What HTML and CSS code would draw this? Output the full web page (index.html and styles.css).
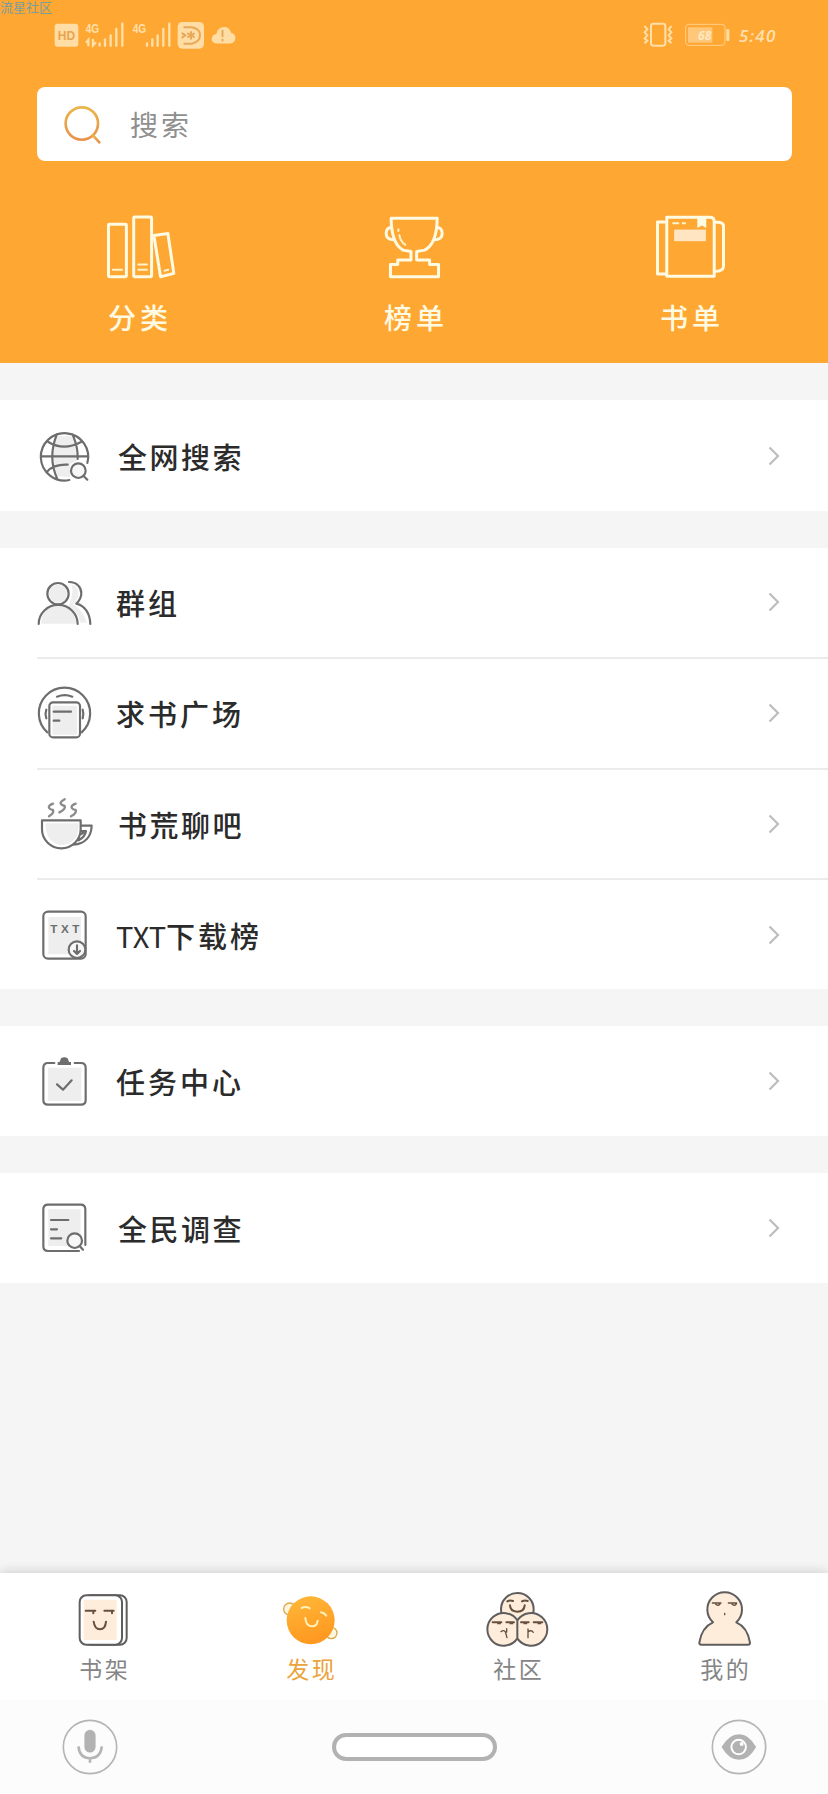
FILE: index.html
```html
<!DOCTYPE html>
<html lang="zh-CN">
<head>
<meta charset="utf-8">
<title>发现</title>
<link rel="stylesheet" href="styles.css">
</head>
<body>
<div class="app">
  <header class="header">
    <span class="watermark">流星社区</span>
    <div class="status">
      <svg class="hd" viewBox="160 60 75 90"><rect x="162" y="71" width="71" height="69" rx="9"/><text x="197.500" y="119" text-anchor="middle" class="hd-text">HD</text></svg>
      <svg class="signal" viewBox="255 60 120 90"><text x="257" y="98" class="net" textLength="40" lengthAdjust="spacingAndGlyphs">4G</text><path d="M265 136v-16l-5 6M279 120v16l7-7M299 130v7M315 118v19M332 106v31M349 87v50M367 70v67"/></svg>
      <svg class="signal second" viewBox="396 60 120 90"><text x="398" y="99" class="net" textLength="40" lengthAdjust="spacingAndGlyphs">4G</text><path d="M441 130v7M457 118v19M473 106v31M490 87v50M508 70v67"/></svg>
      <svg class="cast" viewBox="531 60 84 90"><rect x="533" y="66" width="79" height="80" rx="14"/><path class="cut" d="M553 82h22q25 4 25 24t-25 25h-22M547 100l9 6-9 6M573 96v20M564 101l18 10M582 101l-18 10"/></svg>
      <svg class="cloud" viewBox="632 60 76 90"><path d="M648 131q-15-2-14-15 2-12 14-14 5-21 24-21 17 0 21 17 14 3 13 17-1 13-14 16z"/><path class="cut" d="M667 92v17M667 119v3"/></svg>
      <svg class="vibrate" viewBox="684 60 96 90"><rect x="711" y="71" width="43" height="66" rx="7"/><path d="M693 80l7 8-8 9 8 9-8 9 8 7-7 6M771 80l-7 8 8 9-8 9 8 9-8 7 7 6"/></svg>
      <svg class="battery" viewBox="808 60 138 90"><rect class="outline" x="813" y="73" width="118" height="63" rx="9"/><rect class="level" x="820" y="82" width="73" height="46"/><rect class="tip" x="935" y="87" width="9" height="36" rx="3"/><text x="870" y="120" text-anchor="middle" class="percent">68</text></svg>
      <span class="clock">5:40</span>
    </div>
    <div class="search">
      <svg class="search-icon" viewBox="190 313 116 118"><defs><linearGradient id="ring" x1="0" y1="0" x2="0" y2="1"><stop offset="0" stop-color="#e8b64c"/><stop offset="1" stop-color="#e8924a"/></linearGradient></defs><g fill="none" stroke="url(#ring)" stroke-width="8" stroke-linecap="round"><circle cx="246" cy="369" r="49"/><path d="M279 404l20 22"/></g></svg>
      <span class="placeholder">搜索</span>
    </div>
    <nav class="shortcuts">
      <a class="shortcut"><svg viewBox="66 40 216 202"><g class="line"><rect x="85" y="74" width="54" height="158" rx="3"/><rect x="161" y="52" width="54" height="180" rx="3"/><path d="M222 108l42-6 18 120-40 10z"/></g><path class="thin" d="M98 211h28M175 195h26M175 211h26M254 214l11-3"/></svg><span>分类</span></a>
      <a class="shortcut"><svg viewBox="894 40 216 202"><g class="line"><path d="M933 56h139q-1 78-38 96l-24 4v26h39v13h27v37H931v-37h22v-13h40v-26l-24-4q-35-19-36-96z"/><path d="M935 83q-17 1-17 19t24 19M1070 83q17 1 17 19t-24 19"/></g><path class="thin" d="M955 89v5M958 107q3 20 18 29"/></svg><span>榜单</span></a>
      <a class="shortcut"><svg viewBox="642 40 216 202"><g class="line"><path d="M680 53h130q13 0 13 13v165H680zM680 67h-28v157h28M823 67q28-1 28 12v122q0 15-28 15"/></g><path class="thin" d="M699 71h16M728 71h7"/><path fill="#fffbe3" d="M772 54h27v31l-13-7-14 7z"/><path fill="#ffe5c2" d="M702 90h96v35h-96z"/></svg><span>书单</span></a>
    </nav>
  </header>

  <main class="content">
    <section class="group web">
      <a class="row"><svg class="icon" viewBox="45 50 174 168"><path class="soft" d="M106 75h56l13 70-25 13v40l-40-4q-24-60-4-119z"/><path d="M202 155A71 71 0 1 0 148 206M63 135h142M111 68q-29 70 1 135M158 70q17 40 15 73M85 92q46 28 98 0M81 181q21-23 62-21"/><circle cx="175" cy="178" r="22" class="paper"/><path d="M190 193l12 12"/></svg><span class="label inset">全网搜索</span><svg class="chevron" viewBox="0 0 12 20"><path d="M1.500 1.500l8.500 8.500-8.500 8.500"/></svg></a>
    </section>
    <section class="group social">
      <a class="row"><svg class="icon" viewBox="45 495 174 168"><path class="soft" d="M64 644q1-52 51-52t53 52zM155 527q22 4 20 27-2 20-16 32 30 16 41 55h-18q-8-34-36-50 16-36 9-64z"/><circle class="soft" cx="114" cy="554" r="27"/><circle cx="114" cy="554" r="32"/><path d="M56 645A58 57 0 0 1 173 645M147 519c24 0 37 16 37 34q0 17-15 31c26 6 41 30 42 61"/></svg><span class="label">群组</span><svg class="chevron" viewBox="0 0 12 20"><path d="M1.500 1.500l8.500 8.500-8.500 8.500"/></svg></a>
      <a class="row"><svg class="icon" viewBox="45 42 174 168"><path d="M82 184A77 77 0 1 1 185 184M111 77q23-9 46 0M79 116q-5 13 0 26M188 116q4 13 0 26"/><rect x="88" y="94" width="92" height="105" rx="11" fill="#fff"/><path class="soft" d="M97 104h74v87H97z"/><path d="M101 122h52M101 149h17"/></svg><span class="label">求书广场</span><svg class="chevron" viewBox="0 0 12 20"><path d="M1.500 1.500l8.500 8.500-8.500 8.500"/></svg></a>
      <a class="row"><svg class="icon" viewBox="45 370 174 168"><path class="soft" d="M76 452h100q2 61-51 66-48-7-49-66z"/><path d="M66 443h116v27a58 57 0 0 1-116 0zM183 459h32c-1 33-20 54-55 57M183 475h15q-3 18-22 28M184 484l6-4"/><path class="steam" d="M99 393q-15 6-12 12t12 7q4 9-12 19M134 380q-15 8-12 13t12 7q4 9-16 19M167 393q-15 6-12 12t12 7q4 9-14 19"/></svg><span class="label inset">书荒聊吧</span><svg class="chevron" viewBox="0 0 12 20"><path d="M1.500 1.500l8.500 8.500-8.500 8.500"/></svg></a>
      <a class="row"><svg class="icon" viewBox="45 706 174 168"><rect x="70" y="720" width="127" height="141" rx="14"/><path class="soft" d="M85 736h98v112H85z"/><text x="91" y="783" textLength="87" class="txt">TXT</text><circle class="paper" cx="171" cy="834" r="25"/><path d="M171 821v26M162 838l9 9 9-9"/></svg><span class="label"><span class="latin">TXT</span>下载榜</span><svg class="chevron" viewBox="0 0 12 20"><path d="M1.500 1.500l8.500 8.500-8.500 8.500"/></svg></a>
    </section>
    <section class="group">
      <a class="row"><svg class="icon" viewBox="45 38 174 168"><path class="soft" d="M84 82h100v100H84z"/><path d="M103 68H84q-14 0-14 14v97q0 14 14 14h99q14 0 14-14V82q0-14-14-14h-19M111 132l18 16 26-28"/><path fill="#6d6d6d" stroke="none" d="M113 74v-9h6l4-11q10-7 20 0l4 11h6v9z"/></svg><span class="label">任务中心</span><svg class="chevron" viewBox="0 0 12 20"><path d="M1.500 1.500l8.500 8.500-8.500 8.500"/></svg></a>
    </section>
    <section class="group">
      <a class="row"><svg class="icon" viewBox="45 480 174 168"><path class="soft" d="M85 508h97v110H85z"/><path d="M196 615V508q0-14-14-14H84q-14 0-14 14v111q0 14 14 14h93M93 540h52M93 568h18M93 595h31"/><circle class="paper" cx="164" cy="602" r="22"/><path d="M179 618l10 11"/></svg><span class="label inset">全民调查</span><svg class="chevron" viewBox="0 0 12 20"><path d="M1.500 1.500l8.500 8.500-8.500 8.500"/></svg></a>
    </section>
  </main>

  <nav class="tabs">
    <a class="tab"><svg viewBox="97 90 189 174"><rect x="133" y="106" width="128" height="148" rx="20" fill="#fff"/><rect x="120" y="106" width="127" height="148" rx="20" fill="#fff"/><path fill="#ffeddb" stroke="none" d="M132 119h99v121h-99z"/><path class="face" d="M138 152h29M161 154v6M194 152h28M217 154v6M162 185q3 23 19 23t18-23"/></svg><span>书架</span></a>
    <a class="tab active"><svg viewBox="717 90 189 174"><defs><linearGradient id="planet" x1=".3" y1="0" x2=".6" y2="1"><stop offset="0" stop-color="#ffb637"/><stop offset="1" stop-color="#ff961f"/></linearGradient></defs><g stroke="#dda94b" stroke-width="4" fill="#fff6df"><circle cx="749" cy="147" r="18"/><circle cx="874" cy="219" r="17"/></g><circle cx="812" cy="181" r="72" fill="url(#planet)" stroke="none"/><path stroke="#fff0b5" stroke-width="6" d="M785 144q12-6 24 1M843 157q9 1 16 10M796 174q2 24 19 25 16 1 18-17"/></svg><span>发现</span></a>
    <a class="tab"><svg viewBox="79 90 189 174"><g fill="#ffeddb"><circle cx="173" cy="148" r="49"/><path d="M173 181A49 49 0 1 0 173 235 49 49 0 1 0 173 181v54"/></g><path class="face" d="M143 124q8-5 17-1M187 124q8-5 17-1M151 136q0 18 22 19 21-1 22-19M99 187h26M140 187h23M184 187h23M222 187h26"/><path class="face small" d="M114 191h8M151 191h8M193 191h8M235 191h8M124 215q7-6 13 0l5 18M141 206v10M205 233v-26M205 216q9-8 16 1"/></svg><span>社区</span></a>
    <a class="tab"><svg viewBox="699 90 189 174"><path fill="#ffeddb" d="M759 187A52 52 0 1 1 829 187Q863 202 870 248q0 6-6 6H724q-6 0-6-6Q725 202 759 187z"/><path class="face small" d="M757 129h26M805 129h25M767 133q7 6 13-1M816 133q7 6 13-1M794 160v4"/></svg><span>我的</span></a>
  </nav>

  <footer class="system">
    <svg class="round" viewBox="64 476 170 170"><circle cx="149" cy="561" r="81"/><rect x="132" y="509" width="34" height="69" rx="17" fill="#b2b2b2" stroke="none"/><path class="thick" d="M114 559q3 36 35 36t36-36M149 597v12"/></svg>
    <span class="home"></span>
    <svg class="round" viewBox="751 476 170 170"><circle cx="836" cy="561" r="81"/><path fill="#b2b2b2" stroke="none" d="M783 561q22-39 53-39t52 39q-22 39-52 39t-53-39z"/><circle cx="835" cy="561" r="22" fill="#b2b2b2" stroke="#fff" stroke-width="6"/><circle cx="844" cy="552" r="6" fill="#fff" stroke="none"/></svg>
  </footer>
</div>
</body>
</html>
```
FILE: styles.css
```css
* { box-sizing: border-box; }
body {
  margin: 0;
  font-family: "Noto Sans CJK SC", sans-serif;
  background: #f5f5f5;
}
svg { display: block; flex: none; fill: none; overflow: visible; }
.app { width: 828px; height: 1794px; display: flex; flex-direction: column; }

.header { position: relative; height: 363px; background: #ffa733; padding-top: 20px; }
.watermark {
  position: absolute; left: 0; top: -1px;
  font-size: 13px; line-height: 15px; color: #7a9d9c;
}

.status { height: 30px; display: flex; align-items: center; padding-left: 54px; }
.status svg { height: 30px; fill: #ffdda5; }
.status path, .vibrate rect { stroke: #ffe0a9; stroke-width: 6; stroke-linecap: round; }
.status .signal path { stroke-width: 7; }
.status .signal path, .vibrate path, .vibrate rect, .status .cut { fill: none; }
.status .cut { stroke: #e6a95b; }
.status .cloud path:first-child { stroke: none; }
.hd { width: 25px; }
.signal { width: 40px; margin-left: 6px; }
.signal.second { margin-left: 7px; }
.cast { width: 28px; margin-left: 5px; }
.cloud { width: 25px; margin-left: 6px; }
.vibrate { width: 32px; margin-left: 406px; }
.battery { width: 46px; margin-left: 10px; }
.status .outline { fill: none; stroke: #ffd18c; stroke-width: 3; }
.level { fill: #ffc77a; }
.tip { fill: #ffdda5; }
.hd-text { font: bold 36px "Liberation Sans", sans-serif; fill: #e9a44e; }
.net { font: bold 36px "Liberation Sans", sans-serif; fill: #ffe1ad; }
.percent { font: italic bold 36px "Open Sans", sans-serif; fill: #ffe7c0; }
.clock {
  margin-left: 9px; font: italic 600 17px "Open Sans", sans-serif;
  letter-spacing: 1.200px; color: #ffe0b0;
}

.search {
  height: 74px; margin: 37px 36px 0 37px; border-radius: 8px; background: #fff;
  display: flex; align-items: center; padding-left: 26px;
}
.search-icon { width: 39px; height: 39px; }
.placeholder { margin-left: 28px; font-size: 28px; letter-spacing: 3px; color: #8f8f8f; }

.shortcuts { display: grid; grid-template-columns: repeat(3, 1fr); margin-top: 52px; }
.shortcut { display: flex; flex-direction: column; align-items: center; color: #fffbe3; }
.shortcut svg { width: 72px; height: 67px; }
.shortcut span { margin-top: 17px; font-size: 28px; font-weight: 500; line-height: 40px; letter-spacing: 4px; margin-right: -4px; }
.line { stroke: #fffbe3; stroke-width: 9; stroke-linejoin: round; }
.thin { stroke: #fff3cc; stroke-width: 6; stroke-linecap: round; }

.content { flex: 1; display: flex; flex-direction: column; gap: 37px; padding-top: 37px; }
.group { background: #fff; height: 110px; display: flex; flex-direction: column; }
.group.web { height: 111px; }
.group.social { height: 441px; }
.row { flex: 1; display: flex; align-items: center; margin-left: 37px; padding-right: 48px; }
.row + .row { border-top: 2px solid #ebebeb; }
.icon {
  width: 58px; height: 56px; margin-left: -2px;
  stroke: #6d6d6d; stroke-width: 6.500; stroke-linecap: round; stroke-linejoin: round;
}
.soft { fill: #eee; stroke: none; }
.paper { fill: #f7f7f7; }
.steam { stroke: #8b8b8b; stroke-width: 7; }
.txt { font: bold 35px "Liberation Sans", sans-serif; fill: #6d6d6d; stroke: none; }
.label { margin-left: 23px; flex: 1; font-size: 29px; font-weight: 500; letter-spacing: 3px; color: #2b2b2b; }
.label.inset { margin-left: 25px; letter-spacing: 2.500px; }
.latin { letter-spacing: 0; font-weight: 400; }
.chevron { width: 12px; height: 20px; stroke: #bdbdbd; stroke-width: 2.200; }

.tabs {
  height: 127px; background: #fff; box-shadow: 0 -2px 10px rgba(0, 0, 0, .14);
  display: grid; grid-template-columns: repeat(4, 1fr); padding-top: 17px;
}
.tab { display: flex; flex-direction: column; align-items: center; color: #858585; }
.tab svg { width: 63px; height: 58px; stroke: #5f5d5d; stroke-width: 6; stroke-linecap: round; stroke-linejoin: round; }
.tab span { margin-top: 5px; font-size: 23px; line-height: 30px; letter-spacing: 2.500px; margin-right: -2.500px; }
.tab.active { color: #eba43c; }
.tab .face { stroke: #66503f; stroke-width: 6; fill: none; }
.tab .face.small { stroke-width: 4; }

.system {
  height: 94px; background: #fcfcfc;
  display: flex; align-items: center; justify-content: space-between; padding: 0 61px 0 62px;
}
.round { width: 56px; height: 56px; stroke: #b5b5b5; stroke-width: 5; }
.round .thick { stroke-width: 8; }
.home { width: 165px; height: 28px; border: 4px solid #b2b2b2; border-radius: 14px; background: #fff; }
```
